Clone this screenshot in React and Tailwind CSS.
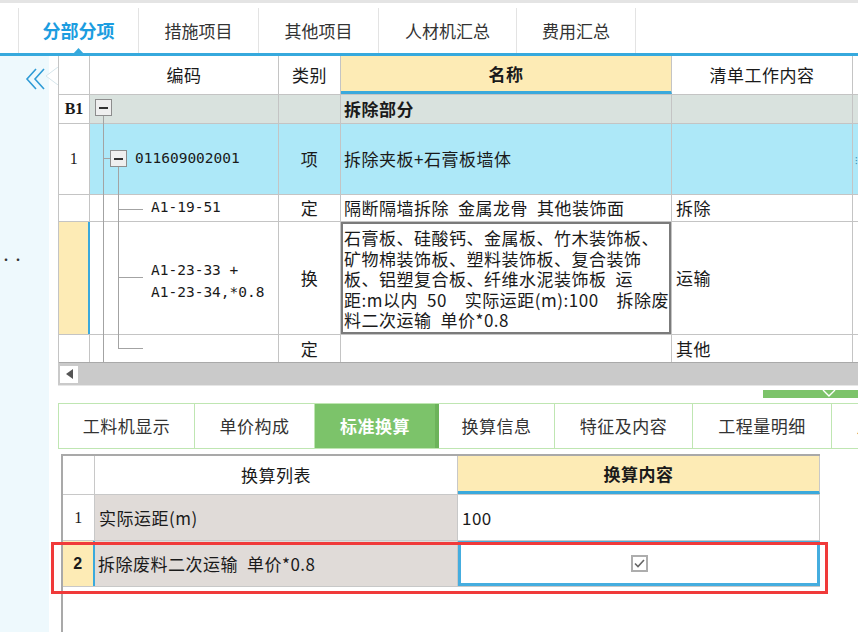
import React from 'react';

const line = 'border-[#c4c4c4]';

const TreeBox = ({ className }) => (
  <span className={`absolute w-[17px] h-[17px] border border-[#8d8d8d] bg-[#efefef] flex items-center justify-center ${className}`}>
    <span className="w-[9px] h-[2px] bg-[#333]" />
  </span>
);

const App = () => {
  return (
    <div className="relative w-[858px] h-[632px] overflow-hidden bg-white text-[#1a1a1a] font-['Noto_Sans_CJK_SC',sans-serif]">
      {/* top tabs */}
      <div className="h-[3px] bg-[#e4e4e4]" />
      <div className="flex h-[50px] pt-[5px] pl-[18px]">
        <div className="w-[120px] border-l border-[#e3e3e3] flex items-center justify-center text-[18px] font-bold text-[#1c9de0]">分部分项</div>
        <div className="w-[120px] border-l border-[#e3e3e3] flex items-center justify-center text-[17px] text-[#333]">措施项目</div>
        <div className="w-[120px] border-l border-[#e3e3e3] flex items-center justify-center text-[17px] text-[#333]">其他项目</div>
        <div className="w-[138px] border-l border-[#e3e3e3] flex items-center justify-center text-[17px] text-[#333]">人材机汇总</div>
        <div className="w-[120px] border-l border-r border-[#e3e3e3] flex items-center justify-center text-[17px] text-[#333]">费用汇总</div>
      </div>
      <div className="h-[3px] bg-[#36a9dd]" />
      <svg className="absolute left-[73px] top-[48px]" width="11" height="6" viewBox="0 0 11 6">
        <polygon points="0,6 5.5,0 11,6" fill="#36a9dd" />
      </svg>

      <div className="flex h-[576px]">
        {/* sidebar */}
        <div className="relative w-[49px] bg-[#eef9fd] pt-[11px] pl-[25px]">
          <svg width="22" height="24" viewBox="0 0 22 24" fill="none" stroke="#2f9bd6" strokeWidth="1.6">
            <polyline points="11,2 2,12 11,22" />
            <polyline points="19,2 10,12 19,22" />
          </svg>
          <div className="absolute left-0 top-[198px] text-[12px] leading-none text-[#333]">··</div>
        </div>
        <svg className="absolute left-[44px] top-[67px]" width="14" height="18" viewBox="0 0 14 18">
          <polygon points="14,0 2,9 14,18" fill="#fff" />
          <polyline points="14,0 2,9 14,18" fill="none" stroke="#d6e6ec" strokeWidth="1" />
        </svg>
        <div className="w-[9px]" />

        {/* main column */}
        <div className="w-[800px] flex flex-col overflow-hidden">
          {/* upper grid */}
          <div className="flex flex-col border-l border-[#c4c4c4] text-[17px] tracking-[0.5px]">
            {/* header */}
            <div className={`flex h-[39px] border-b ${line}`}>
              <div className={`w-[31px] shrink-0 border-r ${line}`} />
              <div className={`w-[189px] shrink-0 border-r ${line} flex items-center justify-center`}>编码</div>
              <div className={`w-[62px] shrink-0 border-r ${line} flex items-center justify-center`}>类别</div>
              <div className={`w-[331px] shrink-0 border-r ${line} bg-[#fdebb5] border-b-[3px] border-b-[#3aa9dc] flex items-center justify-center font-bold`}>名称</div>
              <div className={`w-[181px] shrink-0 border-r ${line} flex items-center justify-center`}>清单工作内容</div>
              <div className="flex-1" />
            </div>
            {/* B1 */}
            <div className={`flex h-[29px] border-b ${line} bg-[#d9e2de]`}>
              <div className={`w-[31px] shrink-0 border-r ${line} bg-white flex items-center justify-center font-['Liberation_Serif',serif] font-bold text-[16px] tracking-normal`}>B1</div>
              <div className={`relative w-[189px] shrink-0 border-r ${line}`}>
                <TreeBox className="left-[5px] top-[4px]" />
                <span className="absolute left-[13px] top-[21px] -bottom-px w-px bg-[#a3a3a3]" />
              </div>
              <div className={`w-[62px] shrink-0 border-r ${line}`} />
              <div className={`w-[331px] shrink-0 border-r ${line} flex items-center pl-[3px] font-bold`}>拆除部分</div>
              <div className={`w-[181px] shrink-0 border-r ${line}`} />
              <div className="flex-1" />
            </div>
            {/* row 1 */}
            <div className={`flex h-[71px] border-b ${line} bg-[#ade8f8]`}>
              <div className={`w-[31px] shrink-0 border-r ${line} bg-white flex items-center justify-center font-['Liberation_Serif',serif] text-[16px]`}>1</div>
              <div className={`relative w-[189px] shrink-0 border-r ${line} flex items-center pl-[45px] font-['DejaVu_Sans_Mono',monospace] text-[14.5px] tracking-normal`}>
                <span className="absolute left-[13px] top-0 -bottom-px w-px bg-[#a3a3a3]" />
                <span className="absolute left-[13px] top-[34px] w-[8px] h-px bg-[#a3a3a3]" />
                <TreeBox className="left-[20px] top-[26px]" />
                <span className="absolute left-[28px] top-[43px] -bottom-px w-px bg-[#a3a3a3]" />
                011609002001
              </div>
              <div className={`w-[62px] shrink-0 border-r ${line} flex items-center justify-center`}>项</div>
              <div className={`w-[331px] shrink-0 border-r ${line} flex items-center pl-[3px]`}>拆除夹板+石膏板墙体</div>
              <div className={`w-[181px] shrink-0 border-r ${line}`} />
              <div className="flex-1 flex items-center pl-[2px] text-[10px] text-[#3a8fb0]">⁝</div>
            </div>
            {/* row 2 */}
            <div className={`flex h-[27px] border-b ${line}`}>
              <div className={`w-[31px] shrink-0 border-r ${line}`} />
              <div className={`relative w-[189px] shrink-0 border-r ${line} flex items-center pl-[61px] font-['DejaVu_Sans_Mono',monospace] text-[14.5px] tracking-normal`}>
                <span className="absolute left-[13px] -top-px -bottom-px w-px bg-[#a3a3a3]" />
                <span className="absolute left-[28px] -top-px -bottom-px w-px bg-[#a3a3a3]" />
                <span className="absolute left-[28px] top-[14px] w-[25px] h-px bg-[#a3a3a3]" />
                A1-19-51
              </div>
              <div className={`w-[62px] shrink-0 border-r ${line} flex items-center justify-center`}>定</div>
              <div className={`w-[331px] shrink-0 border-r ${line} flex items-center pl-[3px] whitespace-pre`}>隔断隔墙拆除{'\u2002'}金属龙骨{'\u2002'}其他装饰面</div>
              <div className={`w-[181px] shrink-0 border-r ${line} flex items-center pl-[4px]`}>拆除</div>
              <div className="flex-1" />
            </div>
            {/* row 3 */}
            <div className={`flex h-[113px] border-b ${line}`}>
              <div className={`w-[31px] shrink-0 border-r-2 border-r-[#3aa9dc] bg-[#fdebb5]`} />
              <div className={`relative w-[189px] shrink-0 border-r ${line} flex flex-col justify-center pl-[61px] font-['DejaVu_Sans_Mono',monospace] text-[14.5px] tracking-normal leading-[22px] whitespace-pre`}>
                <span className="absolute left-[13px] -top-px -bottom-px w-px bg-[#a3a3a3]" />
                <span className="absolute left-[28px] -top-px -bottom-px w-px bg-[#a3a3a3]" />
                <span className="absolute left-[28px] top-[55px] w-[25px] h-px bg-[#a3a3a3]" />
                <div className="pt-[5px]">A1-23-33 +</div>
                <div>A1-23-34,*0.8</div>
              </div>
              <div className={`w-[62px] shrink-0 border-r ${line} flex items-center justify-center`}>换</div>
              <div className={`w-[331px] shrink-0 border-r ${line}`}>
                <div className="h-full border-2 border-[#7b7b7b] pl-[1px] pt-[4px] leading-[20.5px] whitespace-pre">
                  <div>石膏板、硅酸钙、金属板、竹木装饰板、</div>
                  <div>矿物棉装饰板、塑料装饰板、复合装饰</div>
                  <div>板、铝塑复合板、纤维水泥装饰板{'\u2002'}运</div>
                  <div>距:m以内{'\u2002'}50{'\u2002\u2002'}实际运距(m):100{'\u2002\u2002'}拆除废</div>
                  <div>料二次运输{'\u2002'}单价*0.8</div>
                </div>
              </div>
              <div className={`w-[181px] shrink-0 border-r ${line} flex items-center pl-[4px]`}>运输</div>
              <div className="flex-1" />
            </div>
            {/* row 4 */}
            <div className={`flex h-[28px] border-b border-[#a9a9a9]`}>
              <div className={`w-[31px] shrink-0 border-r ${line}`} />
              <div className={`relative w-[189px] shrink-0 border-r ${line}`}>
                <span className="absolute left-[13px] -top-px bottom-0 w-px bg-[#a3a3a3]" />
                <span className="absolute left-[28px] -top-px h-[14px] w-px bg-[#a3a3a3]" />
                <span className="absolute left-[28px] top-[13px] w-[25px] h-px bg-[#a3a3a3]" />
              </div>
              <div className={`w-[62px] shrink-0 border-r ${line} flex items-center justify-center`}>定</div>
              <div className={`w-[331px] shrink-0 border-r ${line}`} />
              <div className={`w-[181px] shrink-0 border-r ${line} flex items-center pl-[4px]`}>其他</div>
              <div className="flex-1" />
            </div>
          </div>

          {/* scrollbar */}
          <div className="h-[22px] bg-[#cacaca] flex items-center pl-[2px]">
            <div className="w-[18px] h-[17px] bg-white flex items-center justify-center">
              <svg width="7" height="10" viewBox="0 0 7 10">
                <polygon points="7,0 0,5 7,10" fill="#555" />
              </svg>
            </div>
          </div>

          {/* splitter */}
          <div className="h-[18px] border-t border-[#e6e6e6] flex justify-end items-start pt-[4px]">
            <div className="w-[95px] h-[8px] bg-[#7cc36a] flex justify-center pl-[36px]">
              <svg width="14" height="8" viewBox="0 0 14 8" fill="none" stroke="#fff" strokeWidth="1.4">
                <polyline points="1,0 7,6 13,0" />
              </svg>
            </div>
          </div>

          {/* lower tabs */}
          <div className="flex h-[46px] border-t border-b border-[#bfe6b2] text-[17px] tracking-[0.5px] text-[#333]">
            <div className="w-[137px] shrink-0 border-l border-r border-[#bfe6b2] flex items-center justify-center">工料机显示</div>
            <div className="w-[120px] shrink-0 border-r border-[#bfe6b2] flex items-center justify-center">单价构成</div>
            <div className="w-[120px] shrink-0 bg-[#7cc36a] flex items-center justify-center font-bold text-white">标准换算</div>
            <div className="w-[120px] shrink-0 border-l-[4px] border-l-[#6cb35a] border-r border-r-[#bfe6b2] flex items-center justify-center">换算信息</div>
            <div className="w-[138px] shrink-0 border-r border-[#bfe6b2] flex items-center justify-center">特征及内容</div>
            <div className="w-[139px] shrink-0 border-r border-[#bfe6b2] flex items-center justify-center">工程量明细</div>
            <div className="w-[120px] shrink-0 flex items-center justify-center">局部汇总</div>
          </div>

          {/* lower grid */}
          <div className="flex-1 pt-[5px] pl-[3px]">
            <div className="h-full w-[759px] border-l-2 border-[#a9a9a9] text-[17px] tracking-[0.5px]">
              <div className="border-t-2 border-[#a9a9a9]">
                <div className="flex h-[39px] border-b border-[#c8c8c8]">
                  <div className="w-[32px] shrink-0 border-r border-[#c8c8c8]" />
                  <div className="w-[363px] shrink-0 border-r border-[#c8c8c8] flex items-center justify-center">换算列表</div>
                  <div className="w-[362px] shrink-0 border-r border-[#c8c8c8] bg-[#fdebb5] border-b-[3px] border-b-[#3aa9dc] flex items-center justify-center font-bold">换算内容</div>
                </div>
                <div className="flex h-[46px] border-b border-[#c8c8c8]">
                  <div className="w-[32px] shrink-0 border-r border-[#c8c8c8] flex items-center justify-center font-['Liberation_Serif',serif] text-[16px]">1</div>
                  <div className="w-[363px] shrink-0 border-r border-[#c8c8c8] bg-[#e0dbd8] flex items-center pl-[4px]">实际运距(m)</div>
                  <div className="w-[362px] shrink-0 border-r border-[#c8c8c8] flex items-center pl-[4px]">100</div>
                </div>
                <div className="flex h-[46px] border-b border-[#c8c8c8]">
                  <div className="w-[32px] shrink-0 border-r-2 border-r-[#3aa9dc] bg-[#fdebb5] flex items-center justify-center font-bold font-['Liberation_Sans',sans-serif] text-[16px]">2</div>
                  <div className="w-[363px] shrink-0 border-r border-[#c8c8c8] bg-[#e0dbd8] flex items-center pl-[3px] whitespace-pre">拆除废料二次运输{'\u2002'}单价*0.8</div>
                  <div className="w-[362px] shrink-0 border-[3px] border-[#45addf] flex items-center justify-center">
                    <div className="w-[17px] h-[17px] border-2 border-[#adadad] bg-white flex items-center justify-center">
                      <svg width="11" height="9" viewBox="0 0 11 9" fill="none" stroke="#666" strokeWidth="1.6">
                        <polyline points="1,4.5 4,7.5 10,1" />
                      </svg>
                    </div>
                  </div>
                </div>
              </div>
            </div>
          </div>
        </div>
      </div>

      {/* red highlight */}
      <div className="absolute left-[51px] top-[542px] w-[777px] h-[52px] border-[3px] border-[#f03a3a] pointer-events-none" />
    </div>
  );
};

export default App;
